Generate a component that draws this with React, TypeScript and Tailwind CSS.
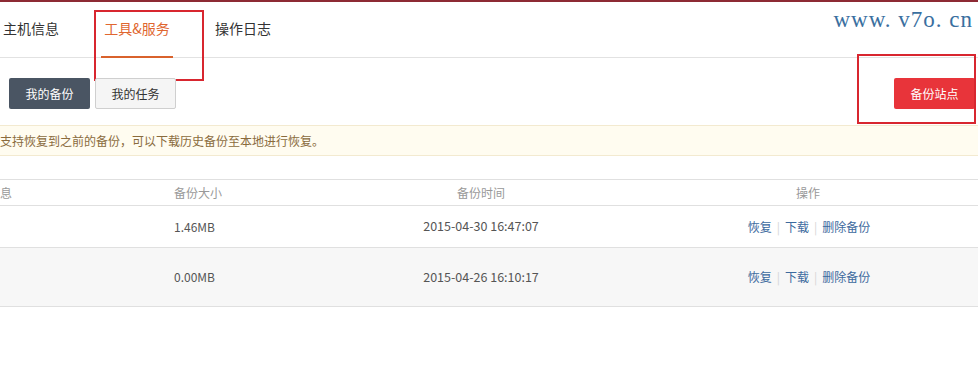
import React from "react";

const cjk = { fontFamily: '"Noto Sans CJK SC", "Noto Sans", sans-serif' };

const rows = [
  { size: "1.46MB", time: "2015-04-30 16:47:07", bg: "bg-white", h: "h-[42px]" },
  { size: "0.00MB", time: "2015-04-26 16:10:17", bg: "bg-[#f7f7f7]", h: "h-[59px]" },
];

function Actions() {
  return (
    <div className="flex items-center justify-center gap-[5px] text-[12px] text-[#3d6a9e]">
      <span>恢复</span>
      <span className="text-[#d5d5d5]">|</span>
      <span>下载</span>
      <span className="text-[#d5d5d5]">|</span>
      <span>删除备份</span>
    </div>
  );
}

export default function App() {
  return (
    <div className="relative w-[978px] h-[386px] overflow-hidden bg-white" style={cjk}>
      <div className="h-[2px] bg-[#8d2a34]" />

      {/* tabs */}
      <div className="relative h-[56px] border-b border-[#e2e2e2] flex items-end">
        <div className="flex items-center h-[56px] text-[14px] text-[#333]">
          <div className="pl-[3px] w-[101px] h-full flex items-center pb-[2px]">主机信息</div>
          <div className="relative w-[72px] h-full flex items-center justify-center text-[#e0662f] pb-[2px]">
            工具&amp;服务
            <div className="absolute left-0 right-0 bottom-[-1px] h-[2px] bg-[#d9622c]" />
          </div>
          <div className="pl-[42px] h-full flex items-center pb-[2px]">操作日志</div>
        </div>
        <div
          className="absolute right-[5px] top-[1px] text-[23px] text-[#3a6f9f] tracking-[1px]"
          style={{ fontFamily: '"Liberation Serif", "DejaVu Serif", serif' }}
        >
          www. v7o. cn
        </div>
        {/* annotation boxes */}
        <div className="absolute left-[94px] top-[8px] w-[110px] h-[71px] border-2 border-[#d8262f]" />
      </div>

      {/* buttons */}
      <div className="relative flex items-center justify-between pl-[9px] pr-[3px] pt-[20px] h-[67px]">
        <div className="flex gap-[5px] self-start">
          <div className="w-[81px] h-[31px] rounded-[2px] bg-[#4a5563] text-white text-[12px] flex items-center justify-center">
            我的备份
          </div>
          <div className="w-[81px] h-[31px] rounded-[2px] bg-[#f5f5f5] border border-[#cfcfcf] text-[#333] text-[12px] flex items-center justify-center">
            我的任务
          </div>
        </div>
        <div className="self-start w-[81px] h-[31px] rounded-[2px] bg-[#e8343a] text-white text-[12px] flex items-center justify-center">
          备份站点
        </div>
        <div className="absolute left-[857px] top-[-4px] w-[119px] h-[70px] border-2 border-[#d8262f]" />
      </div>

      {/* notice */}
      <div className="h-[31px] bg-[#fffcf0] border-y border-[#f3ead0] flex items-center text-[12px] text-[#8a6b3d]">
        支持恢复到之前的备份，可以下载历史备份至本地进行恢复。
      </div>

      {/* table */}
      <div className="mt-[23px] border-t border-[#e0e0e0] text-[12px]">
        <div className="grid grid-cols-[174px_150px_314px_342px] h-[26px] items-center border-b border-[#e0e0e0] text-[#999]">
          <div>息</div>
          <div>备份大小</div>
          <div className="text-center">备份时间</div>
          <div className="text-center pr-[2px]">操作</div>
        </div>
        {rows.map((r) => (
          <div
            key={r.time}
            className={`grid grid-cols-[174px_150px_314px_342px] ${r.h} items-center border-b border-[#e0e0e0] ${r.bg} text-[#555]`}
          >
            <div />
            <div>{r.size}</div>
            <div className="text-center text-[12.5px]">{r.time}</div>
            <Actions />
          </div>
        ))}
      </div>
    </div>
  );
}
